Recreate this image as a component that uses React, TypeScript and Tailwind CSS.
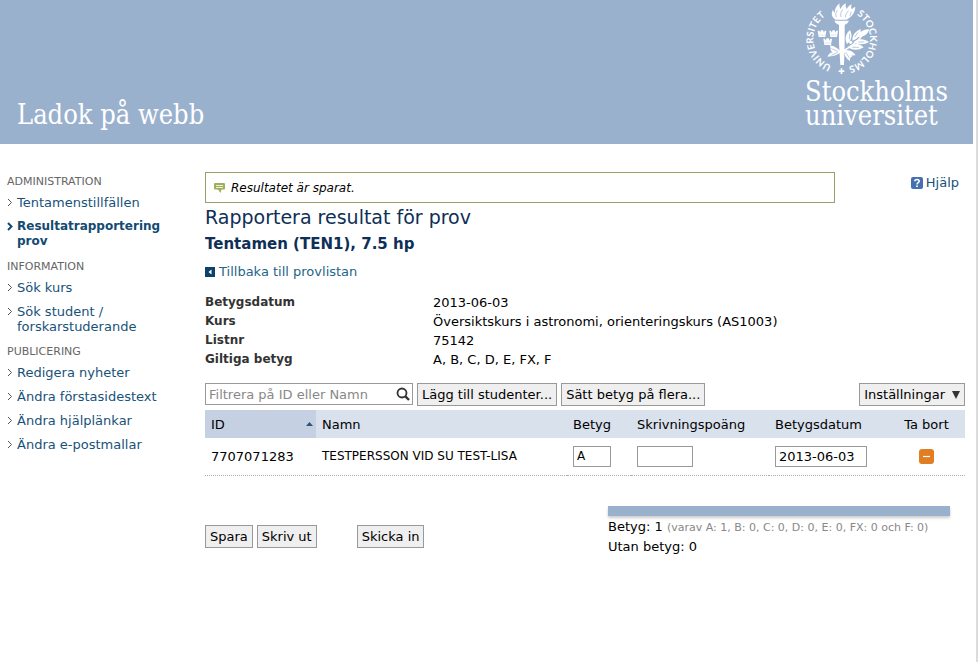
import { useState } from 'react'

interface NavItem {
  label: string
  active?: boolean
}

const NAV: { title: string; items: NavItem[] }[] = [
  {
    title: 'Administration',
    items: [{ label: 'Tentamenstillfällen' }, { label: 'Resultatrapportering prov', active: true }],
  },
  {
    title: 'Information',
    items: [{ label: 'Sök kurs' }, { label: 'Sök student / forskarstuderande' }],
  },
  {
    title: 'Publicering',
    items: [
      { label: 'Redigera nyheter' },
      { label: 'Ändra förstasidestext' },
      { label: 'Ändra hjälplänkar' },
      { label: 'Ändra e-postmallar' },
    ],
  },
]

const DETAILS = [
  { term: 'Betygsdatum', value: '2013-06-03' },
  { term: 'Kurs', value: 'Översiktskurs i astronomi, orienteringskurs (AS1003)' },
  { term: 'Listnr', value: '75142' },
  { term: 'Giltiga betyg', value: 'A, B, C, D, E, FX, F' },
]

export default function App() {
  return (
    <div className="min-h-screen border-r-2 border-[#dcdcdc] bg-white pr-[3px] font-['Verdana','DejaVu_Sans',sans-serif] text-[13px] leading-[15px] text-black">
      <Header />
      <div className="flex pt-7">
        <Sidebar />
        <main className="min-w-0 flex-1 pr-2">
          <div className="flex items-start">
            <p
              role="status"
              className="flex h-[31px] flex-1 items-center gap-[6px] border border-[#9a9f6a] px-2 pt-px text-[12px] italic"
            >
              <SpeechIcon />
              Resultatet är sparat.
            </p>
            <div className="flex w-[130px] justify-end pt-[3px] pr-[6px]">
              <a href="#hjalp" className="flex items-center gap-[3px] text-[#17527a]">
                <HelpIcon />
                Hjälp
              </a>
            </div>
          </div>
          <h1 className="mt-[2px] text-[19px] leading-6 text-[#0e2f56]">Rapportera resultat för prov</h1>
          <h2 className="mt-[5px] text-[15px] leading-5 font-bold text-[#0e2f56]">Tentamen (TEN1), 7.5 hp</h2>
          <a href="#provlista" className="mt-[10px] inline-flex items-center gap-1 text-[#256585]">
            <BackIcon />
            Tillbaka till provlistan
          </a>
          <dl className="mt-[13px] grid grid-cols-[228px_1fr] leading-[19px]">
            {DETAILS.map((d) => (
              <div key={d.term} className="contents">
                <dt className="text-[12px] font-bold text-[#333]">{d.term}</dt>
                <dd>{d.value}</dd>
              </div>
            ))}
          </dl>
          <Toolbar />
          <ResultTable />
          <Footer />
        </main>
      </div>
    </div>
  )
}

function Header() {
  return (
    <header className="flex h-36 justify-between bg-[#9ab1ce] pr-[22px] pl-[17px] font-['DejaVu_Serif_Condensed','DejaVu_Serif',serif] text-[27px] text-white">
      <p className="self-end pb-[13px] leading-8">Ladok på webb</p>
      <div className="w-[146px] pt-[2px]">
        <Seal />
        <p className="mt-[5px] leading-6">
          Stockholms
          <br />
          universitet
        </p>
      </div>
    </header>
  )
}

function Sidebar() {
  return (
    <nav className="w-[205px] shrink-0 px-[7px] pt-px">
      {NAV.map((section) => (
        <div key={section.title}>
          <h3 className="mb-1 text-[11px] leading-[18px] text-[#666] uppercase">{section.title}</h3>
          <ul>
            {section.items.map((item) => (
              <li key={item.label} className="mb-[9px] flex gap-1">
                <Chevron bold={item.active} />
                <a
                  href="#"
                  className={`w-[144px] ${item.active ? 'text-[12px] font-bold text-[#134a72]' : 'text-[#17527a]'}`}
                >
                  {item.label}
                </a>
              </li>
            ))}
          </ul>
        </div>
      ))}
    </nav>
  )
}

const BUTTON = 'h-[23px] shrink-0 cursor-pointer border border-[#999] bg-[#efefef] px-1 whitespace-nowrap'

function Toolbar() {
  const [filter, setFilter] = useState('')

  return (
    <div className="mt-[14px] flex gap-1">
      <div className="flex h-[22px] w-[208px] items-center border border-[#999] bg-white pr-[2px]">
        <input
          type="text"
          aria-label="Filtrera på ID eller Namn"
          placeholder="Filtrera på ID eller Namn"
          value={filter}
          onChange={(e) => setFilter(e.target.value)}
          className="min-w-0 flex-1 pl-[3px] outline-none placeholder:text-[#888]"
        />
        <button type="button" aria-label="Sök" className="cursor-pointer">
          <svg width="14" height="14" viewBox="0 0 14 14" fill="none" stroke="#333" strokeWidth="1.800">
            <circle cx="6" cy="6" r="4.500" />
            <path d="M9.400 9.400 13 13" strokeWidth="2.400" />
          </svg>
        </button>
      </div>
      <button type="button" className={BUTTON}>
        Lägg till studenter...
      </button>
      <button type="button" className={BUTTON}>
        Sätt betyg på flera...
      </button>
      <button type="button" className={`${BUTTON} ml-auto flex items-center gap-[7px]`}>
        Inställningar
        <svg width="8" height="8" viewBox="0 0 8 8" fill="#333">
          <path d="M0 0h8L4 8z" />
        </svg>
      </button>
    </div>
  )
}

function ResultTable() {
  const [grade, setGrade] = useState('A')
  const [points, setPoints] = useState('')
  const [date, setDate] = useState('2013-06-03')

  return (
    <table className="mt-1 w-full table-fixed border-collapse text-left">
      <colgroup>
        <col className="w-[111px]" />
        <col />
        <col className="w-16" />
        <col className="w-[138px]" />
        <col className="w-[119px]" />
        <col className="w-[77px]" />
      </colgroup>
      <thead>
        <tr className="h-7 bg-[#d8e1ec]">
          <th className="bg-[#c5d0e3] pr-[3px] pl-[6px] font-normal">
            <span className="flex items-center justify-between">
              ID
              <svg width="7" height="4" viewBox="0 0 7 4" fill="#2f5479">
                <path d="M0 4h7L3.500 0z" />
              </svg>
            </span>
          </th>
          <th className="px-[6px] font-normal">Namn</th>
          <th className="px-[6px] font-normal">Betyg</th>
          <th className="px-[6px] font-normal">Skrivningspoäng</th>
          <th className="px-[6px] font-normal">Betygsdatum</th>
          <th className="text-center font-normal">Ta bort</th>
        </tr>
      </thead>
      <tbody>
        <tr className="h-[37px] border-b border-dotted border-[#aaa]">
          <td className="px-[6px]">7707071283</td>
          <td className="px-[6px] text-[12px]">TESTPERSSON VID SU TEST-LISA</td>
          <td className="px-[6px]">
            <input
              aria-label="Betyg"
              value={grade}
              onChange={(e) => setGrade(e.target.value)}
              className="block h-[21px] w-[38px] border border-[#999] px-[3px] text-[12px]"
            />
          </td>
          <td className="px-[6px]">
            <input
              aria-label="Skrivningspoäng"
              value={points}
              onChange={(e) => setPoints(e.target.value)}
              className="block h-[21px] w-14 border border-[#999] px-[3px]"
            />
          </td>
          <td className="px-[6px]">
            <input
              aria-label="Betygsdatum"
              value={date}
              onChange={(e) => setDate(e.target.value)}
              className="block h-[21px] w-[92px] border border-[#999] px-[3px]"
            />
          </td>
          <td>
            <button type="button" aria-label="Ta bort" className="mx-auto block cursor-pointer">
              <svg width="15" height="15" viewBox="0 0 15 15">
                <rect width="15" height="15" rx="3" fill="#e17d22" />
                <path d="M4 7.500h7" stroke="#fff" strokeWidth="1.200" />
              </svg>
            </button>
          </td>
        </tr>
      </tbody>
    </table>
  )
}

function Footer() {
  return (
    <div className="mt-[30px] flex items-start justify-between pr-[15px]">
      <div className="flex gap-1 pt-[19px]">
        <button type="button" className={BUTTON}>
          Spara
        </button>
        <button type="button" className={BUTTON}>
          Skriv ut
        </button>
        <button type="button" className={`${BUTTON} ml-9`}>
          Skicka in
        </button>
      </div>
      <div className="w-[342px] leading-[19px]">
        <div className="mb-px h-[10px] bg-[#9ab1ce] shadow-[0_2px_3px_#ccc]" />
        <p className="whitespace-nowrap">
          Betyg: 1 <span className="text-[11px] text-[#888]">(varav A: 1, B: 0, C: 0, D: 0, E: 0, FX: 0 och F: 0)</span>
        </p>
        <p>Utan betyg: 0</p>
      </div>
    </div>
  )
}

function Chevron({ bold }: { bold?: boolean }) {
  return (
    <svg width="6" height="9" viewBox="0 0 6 9" fill="none" className="mt-[3px] shrink-0">
      <path d="M1 1l3.500 3.500L1 8" stroke={bold ? '#134a72' : '#555'} strokeWidth={bold ? 2 : 1} />
    </svg>
  )
}

function SpeechIcon() {
  return (
    <svg width="11" height="10" viewBox="0 0 11 10" className="shrink-0">
      <path d="M1 0h9a1 1 0 0 1 1 1v4.500a1 1 0 0 1-1 1H7.500L6.500 10 4 6.500H1a1 1 0 0 1-1-1V1a1 1 0 0 1 1-1z" fill="#a3ae5c" />
      <path d="M2 2.500h7M2 4.500h7" stroke="#fff" strokeOpacity=".8" />
    </svg>
  )
}

function HelpIcon() {
  return (
    <svg width="12" height="12" viewBox="0 0 12 12" className="shrink-0">
      <rect width="12" height="12" rx="2" fill="#4671b0" />
      <path d="M3.800 4.300c0-2.400 4.400-2.400 4.400 0C8.200 5.800 6 5.600 6 7.500" fill="none" stroke="#fff" strokeWidth="1.600" />
      <path d="M5.100 8.500h1.800V10H5.100z" fill="#fff" />
    </svg>
  )
}

function BackIcon() {
  return (
    <svg width="10" height="10" viewBox="0 0 10 10" className="mt-px shrink-0">
      <path d="M0 0h10v10H0z" fill="#0d4169" />
      <path d="M6.500 2.500v5L3.500 5z" fill="#fff" />
    </svg>
  )
}

function Crown({ x, y }: { x: number; y: number }) {
  return (
    <g transform={`translate(${x} ${y})`}>
      <path d="M0 1h5l2 6 3-7h6l3 7 2-6h5l-3 19H3z" />
      <path d="M4 14h18" stroke="#9ab1ce" strokeWidth="1" />
    </g>
  )
}

function Seal() {
  return (
    <svg
      width="74"
      height="73"
      viewBox="0 0 222 219"
      fill="#fff"
      role="img"
      aria-label="Stockholms universitet"
      className="block overflow-visible"
    >
      <defs>
        <path id="seal-left" d="M110 196A85 85 0 0 1 110 26" />
        <path id="seal-right" d="M110 26A85 85 0 0 1 110 196" />
      </defs>
      <g className="font-['Lato','Liberation_Sans',sans-serif] font-bold" fontSize="29" textAnchor="middle">
        <text>
          <textPath href="#seal-left" startOffset="46%">
            UNIVERSITET
          </textPath>
        </text>
        <text>
          <textPath href="#seal-right" startOffset="55%">
            STOCKHOLMS
          </textPath>
        </text>
      </g>
      <path d="M107 199h5v6h6v5h-6v6h-5v-6h-6v-5h6z" />
      {/* torch: flame, bowl and staff */}
      <path d="M91 53c-12-9-13-20-7-30 1 5 3 7 5 9 0-11 5-20 15-28-2 8 0 12 3 17 3-8 8-13 16-17-3 8 0 12 2 17 4-7 9-11 15-14-3 7-1 11 1 15 3-4 6-6 10-7-1 17-11 30-26 38z" />
      <path d="M94 45c-4-9 0-14 3-20M108 45c-3-11 1-15 5-23M121 46c0-10 5-12 9-20M134 42c3-5 4-7 4-13" fill="none" stroke="#9ab1ce" strokeWidth="2" />
      <path d="M88 56h44l-4 7-9 6v54l-2 66h-11l-4-66V69l-10-6z" />
      <Crown x={38} y={85} />
      <Crown x={73} y={85} />
      <Crown x={55} y={109} />
      {/* olive branch and ribbon */}
      <path d="M88 157c38-10 66-32 92-66" fill="none" stroke="#fff" strokeWidth="5" />
      <path d="M126 126c-8-17-4-30 9-42 8 16 6 31-9 42zM142 116c0-17 9-28 25-35 1 18-8 30-25 35zM158 105c5-15 17-24 35-23-4 14-16 24-35 23zM128 136c16-13 32-13 48 0-16 10-32 10-48 0zM146 119c15-10 30-10 46 1-15 9-31 9-46-1zM116 146c16-4 28 1 36 14-17 2-29-2-36-14z" />
      <path d="M106 148c-12-14-20-15-31-19 3 11 0 18 8 22-8 1-12 6-16 13 16-1 29-2 39-16zM118 142c14 6 18 17 25 20-8 4-9 9-8 15-12-6-18-18-17-35z" />
      <path d="M79 140l19 8M79 160l19-9M122 151l11 16M133 112l1-17M149 105l10-14M142 136h20M160 120h18" stroke="#9ab1ce" strokeWidth="2" />
      <circle cx="137" cy="121" r="5" />
      <circle cx="156" cy="128" r="4" />
    </svg>
  )
}
